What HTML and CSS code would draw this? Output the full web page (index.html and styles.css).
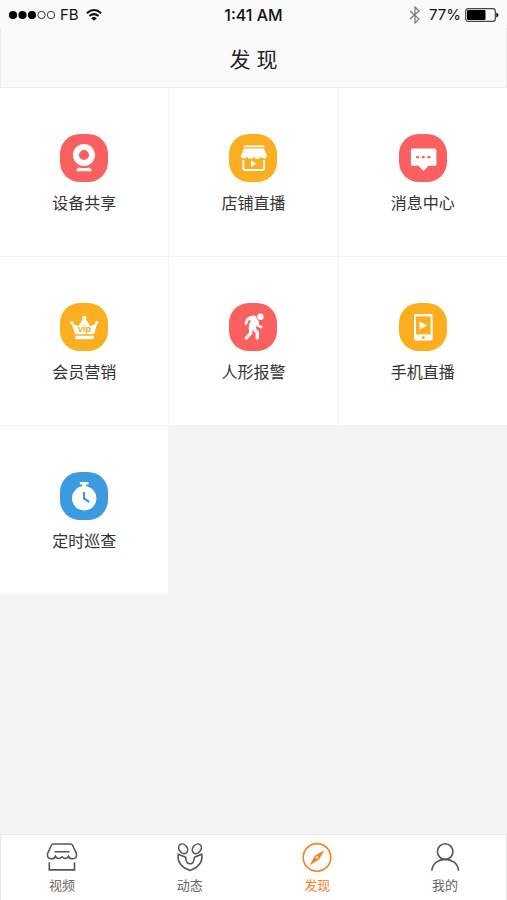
FILE: index.html
```html
<!DOCTYPE html>
<html lang="zh-CN">
<head>
<meta charset="utf-8">
<meta name="viewport" content="width=device-width, initial-scale=1">
<title>发现</title>
<link rel="stylesheet" href="styles.css">
</head>
<body>
<div class="status">
  <div class="status-side">
    <svg class="signal" width="48" height="10" viewBox="0 0 48 10" aria-hidden="true">
      <circle cx="5" cy="5" r="4.1"/><circle cx="14.5" cy="5" r="4.1"/><circle cx="24" cy="5" r="4.1"/>
      <g fill="none" stroke="#222" stroke-width=".9"><circle cx="33.5" cy="5" r="3.7"/><circle cx="43" cy="5" r="3.7"/></g>
    </svg>
    <span class="carrier">FB</span>
    <svg width="18" height="14" viewBox="0 0 18 14" aria-hidden="true">
      <g fill="none" stroke="#111" stroke-width="2"><path d="M1.8 5.2Q9-1.2 16.2 5.2"/><path d="M4.4 8.1Q9 4.1 13.6 8.1"/></g>
      <path d="M6.2 10.2Q9 8 11.8 10.2L9 12.8Z"/>
    </svg>
  </div>
  <time class="clock">1:41 AM</time>
  <div class="status-side status-end">
    <svg width="12" height="18" viewBox="0 0 12 18" fill="none" stroke="#777" stroke-width="1.2" aria-hidden="true"><path d="M1 5l9 8-4 4V1l4 4-9 8"/></svg>
    <span class="charge">77%</span>
    <svg width="34" height="14" viewBox="0 0 34 14" aria-hidden="true">
      <rect x=".7" y=".7" width="29.6" height="12.6" rx="2.4" fill="none" stroke="#444" stroke-width="1.2"/>
      <rect x="2" y="2" width="18.5" height="10" rx="1"/>
      <path d="M31.3 4.5Q33.5 5.5 33.5 7T31.3 9.5Z"/>
    </svg>
  </div>
</div>
<header class="header"><h1>发 现</h1></header>
<main class="content">
  <div class="grid">
    <a class="cell" href="#share">
      <svg class="tile red" viewBox="0 0 48 48" aria-hidden="true">
        <circle cx="24" cy="21" r="8" fill="none" stroke="#fff" stroke-width="6"/>
        <path d="M18.5 33.4Q24 35 29.5 33.4L31.5 35.6V37.2H16.5V35.6Z"/>
      </svg>
      <span>设备共享</span>
    </a>
    <a class="cell" href="#shop">
      <svg class="tile amber" viewBox="0 0 48 48" aria-hidden="true">
        <rect x="14.5" y="11.5" width="21" height="1.8" rx=".9"/>
        <path d="M15 14.4H35L37.8 21.5Q37.8 24.6 35 24.6Q32.8 24.6 31.6 22.8Q30.4 25 28.2 25Q26 25 24.9 22.8Q23.8 25 21.6 25Q19.4 25 18.2 22.8Q17 24.6 14.8 24.6Q12 24.6 12 21.5Z"/>
        <path d="M14.3 26V34.5Q14.3 36 15.8 36H33.6Q35.1 36 35.1 34.5V26" fill="none" stroke="#fff" stroke-width="1.9"/>
        <path d="M22 26.6L27.8 29.8L22 33Z"/>
      </svg>
      <span>店铺直播</span>
    </a>
    <a class="cell" href="#messages">
      <svg class="tile red" viewBox="0 0 48 48" aria-hidden="true">
        <path d="M13.5 14.6H35.8Q37.4 14.6 37.4 16.2V30.2Q37.4 31.8 35.8 31.8H29.5L24.5 37L19.5 31.8H13.5Q11.9 31.8 11.9 30.2V16.2Q11.9 14.6 13.5 14.6Z"/>
        <g class="cut"><circle cx="18.6" cy="23.2" r="1.4"/><circle cx="24.3" cy="23.2" r="1.4"/><circle cx="30" cy="23.2" r="1.4"/></g>
      </svg>
      <span>消息中心</span>
    </a>
    <a class="cell" href="#members">
      <svg class="tile amber" viewBox="0 0 48 48" aria-hidden="true">
        <circle cx="11.8" cy="19.7" r="1.7"/><circle cx="24.3" cy="14.9" r="2.1"/><circle cx="36.8" cy="19.7" r="1.7"/>
        <path d="M11.3 20L18.4 23.2L23.2 15.5H25.4L30.2 23.2L37.3 20L34 31.2H15.2Z"/>
        <rect x="15.2" y="32.7" width="18.6" height="3.5" rx=".8"/>
        <text class="vip cut" x="24.4" y="28.6" text-anchor="middle">vip</text>
      </svg>
      <span>会员营销</span>
    </a>
    <a class="cell" href="#alarm">
      <svg class="tile red" viewBox="0 0 48 48" aria-hidden="true">
        <circle cx="31.4" cy="13.8" r="3.2"/>
        <path d="M18.6 14.8Q23 11.4 27.2 13.2Q27.2 16.6 30.4 18.4L27.6 22.4L26.4 27L19.8 26.4Q19.2 21.4 21.8 17.8Z"/>
        <g fill="none" stroke="#fff" stroke-linecap="round" stroke-linejoin="round">
          <path d="M23 15.2L18.4 16.4L17 20.4" stroke-width="2.8"/>
          <path d="M28 19L29.3 22.8L32.4 24.2" stroke-width="2.5"/>
          <path d="M21.6 25.5L21.8 30L17.4 35" stroke-width="3.4"/>
          <path d="M24.6 25.5L28.4 29.4L28.2 35" stroke-width="3.4"/>
        </g>
      </svg>
      <span>人形报警</span>
    </a>
    <a class="cell" href="#mobile">
      <svg class="tile amber" viewBox="0 0 48 48" aria-hidden="true">
        <rect x="15" y="11" width="18.6" height="26.6" rx="1.8"/>
        <rect class="cut" x="17" y="13.4" width="14.6" height="18"/>
        <path d="M20.6 18.6L28 22.5L20.6 26.4Z"/>
        <circle class="cut" cx="24.3" cy="34.5" r="1.5"/>
      </svg>
      <span>手机直播</span>
    </a>
    <a class="cell" href="#patrol">
      <svg class="tile blue" viewBox="0 0 48 48" aria-hidden="true">
        <circle cx="24.2" cy="26.3" r="12.2"/>
        <rect x="19.8" y="10" width="8.8" height="2.4" rx=".6"/><rect x="22.4" y="11" width="3.6" height="4"/>
        <path d="M24 20V26.5L29.2 30" fill="none" stroke="#3c9be0" stroke-width="2.2"/>
      </svg>
      <span>定时巡查</span>
    </a>
  </div>
</main>
<nav class="tabs">
  <a class="tab" href="#video">
    <svg viewBox="0 0 32 32" aria-hidden="true">
      <path d="M7.5 3H24.5Q26 3 26.7 4.5L30.4 12.5Q31.2 17.6 26.8 17.8Q23.5 18 22.6 15.2Q19.4 19.6 16 15.8Q12.6 19.6 9.4 15.2Q8.5 18 5.2 17.8Q.8 17.6 1.6 12.5L5.3 4.5Q6 3 7.5 3Z"/>
      <path d="M8.5 10.7H23.5M3.3 21.3V28.9H28.5V21.3"/>
    </svg>
    <span>视频</span>
  </a>
  <a class="tab" href="#moments">
    <svg viewBox="0 0 32 32" aria-hidden="true">
      <ellipse cx="9.2" cy="7.8" rx="4" ry="5.2" transform="rotate(-38 9.2 7.8)"/>
      <ellipse cx="22.8" cy="7.8" rx="4" ry="5.2" transform="rotate(38 22.8 7.8)"/>
      <path d="M4.3 13.2L11.6 16.2Q12 22.8 16 22.8T20.4 16.2L27.7 13.2Q29.6 24.6 16 29.4Q2.4 24.6 4.3 13.2Z"/>
    </svg>
    <span>动态</span>
  </a>
  <a class="tab active" href="#discover" aria-current="page">
    <svg viewBox="0 0 32 32" aria-hidden="true">
      <circle cx="16" cy="16.4" r="13.8"/>
      <path class="needle" d="M23.4 9L18.1 18.4L8.6 24.3L13.9 14.8Z"/>
      <circle class="pivot" cx="16" cy="16.5" r="1.3"/>
    </svg>
    <span>发现</span>
  </a>
  <a class="tab" href="#mine">
    <svg viewBox="0 0 32 32" aria-hidden="true"><circle cx="16.2" cy="10.6" r="7.8"/><path d="M2.8 29.6C4.2 14.6 28.2 14.6 29.6 29.6"/></svg>
    <span>我的</span>
  </a>
</nav>
</body>
</html>
```

FILE: styles.css
```css
* {
  box-sizing: border-box;
}

body {
  margin: 0;
  min-height: 100vh;
  display: flex;
  flex-direction: column;
  background: #f4f4f4;
  color: #333;
  font-family: "Liberation Sans", "Noto Sans CJK SC", sans-serif;
}

a {
  color: inherit;
  text-decoration: none;
}

.status {
  display: grid;
  grid-template-columns: 1fr auto 1fr;
  align-items: center;
  height: 28px;
  padding: 2px 8px 0;
  background: #fafafa;
  color: #111;
  font-family: Inter, sans-serif;
  font-size: 16px;
  line-height: 20px;
}

.status-side {
  display: flex;
  align-items: center;
  gap: 4px;
  font-size: 15px;
}

.status-end {
  justify-content: flex-end;
}

.carrier {
  margin-right: 2px;
}

.charge {
  margin-left: 4px;
}

.clock {
  font-weight: 500;
}

.header {
  height: 60px;
  padding-top: 4px;
  display: flex;
  align-items: center;
  justify-content: center;
  background: #fafafa;
  border: 1px solid #ececec;
  border-top: 0;
}

h1 {
  margin: 0;
  font-size: 21px;
  font-weight: 400;
  line-height: 32px;
  color: #222;
}

.content {
  flex: 1;
}

.grid {
  display: grid;
  grid-template-columns: repeat(3, 1fr);
  gap: 1px;
}

.cell {
  height: 168px;
  padding-top: 46px;
  display: flex;
  flex-direction: column;
  align-items: center;
  gap: 10px;
  background: #fff;
  font-size: 16px;
  line-height: 24px;
}

.tile {
  width: 48px;
  height: 48px;
  border-radius: 20px;
  fill: #fff;
}

.red {
  background: #f9605f;
}

.amber {
  background: #fbae20;
}

.blue {
  background: #3c9be0;
}

.red .cut {
  fill: #f9605f;
}

.amber .cut {
  fill: #fbae20;
}

.vip {
  font-family: Inter, sans-serif;
  font-size: 9px;
  font-weight: 700;
}

.tabs {
  display: flex;
  justify-content: space-between;
  height: 66px;
  padding: 6px 45px 0;
  background: #fff;
  border: 1px solid #e6e6e6;
  border-bottom: 0;
}

.tab {
  display: flex;
  flex-direction: column;
  align-items: center;
  gap: 3px;
  color: #666;
  font-size: 13px;
  line-height: 20px;
}

.tab svg {
  width: 32px;
  height: 32px;
  fill: none;
  stroke: #555;
  stroke-width: 1.6;
}

.active {
  color: #f5821f;
}

.active svg {
  stroke: #f5821f;
}

.active .needle {
  fill: #f5821f;
  stroke: none;
}

.active .pivot {
  fill: #fff;
  stroke: none;
}
```
